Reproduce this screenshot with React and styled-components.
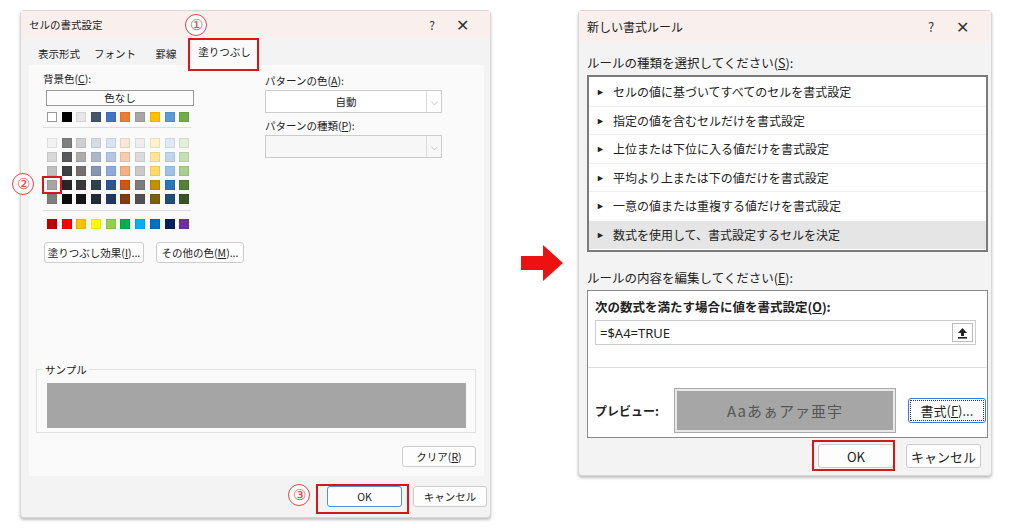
import React from "react";
import styled, { createGlobalStyle } from "styled-components";

const G = createGlobalStyle`
  html,body{margin:0;padding:0;background:#fff;}
  body{font-family:"Noto Sans CJK JP","Noto Sans",sans-serif;color:#222;}
`;

const Page = styled.div`
  width:1024px;height:528px;position:relative;display:flex;align-items:flex-start;
`;
const Dialog = styled.div`
  position:relative;box-sizing:border-box;background:#f3f3f3;
  border:1px solid #d8d8d8;border-radius:4px;display:flex;flex-direction:column;
  margin-left:${p=>p.ml}px;margin-top:10px;width:${p=>p.w}px;height:${p=>p.h}px;
  box-shadow:0 2px 3px rgba(0,0,0,.25);
`;
const TitleBar = styled.div`
  height:${p=>p.h}px;background:#f9efec;display:flex;align-items:center;
  padding:0 18px 0 8px;font-size:${p=>p.fs}px;color:#222;flex-shrink:0;
`;
const TitleText = styled.span`flex:1;`;
const TBtn = styled.span`width:${p=>p.w}px;text-align:center;font-size:${p=>p.fs}px;color:#333;`;
const Tabs = styled.div`display:flex;align-items:flex-end;height:28px;padding-left:8px;font-size:10.5px;`;
const Tab = styled.div`
  width:${p=>p.w}px;height:24px;display:flex;align-items:center;justify-content:center;white-space:nowrap;
  ${p=>p.active&&`background:#fafafa;height:28px;`}
`;
const RedBox = styled.div`
  position:absolute;border:2px solid #d9141b;box-sizing:border-box;
`;
const Circ = styled.div`
  position:absolute;width:20px;height:20px;border:1px solid #e0463e;border-radius:50%;
  color:#e0463e;font-size:15px;display:flex;align-items:center;justify-content:center;
  font-family:"Liberation Sans",sans-serif;background:#fff;
`;
const Panel = styled.div`
  background:#fafafa;margin:0 6px 0 8px;flex:1;display:flex;flex-direction:column;
  padding:6px 8px 9px 14px;font-size:10.5px;
`;
const Cols = styled.div`display:flex;gap:62px;`;
const Col = styled.div`display:flex;flex-direction:column;width:${p=>p.w}px;`;
const Lbl = styled.div`font-size:${p=>p.fs||10.5}px;margin:${p=>p.m||"0"};font-weight:${p=>p.b?700:400};color:#222;white-space:nowrap;`;
const NoColor = styled.div`
  margin:4px 0 0 3px;height:14px;border:1px solid #999;background:#fcfcfc;text-align:center;
  font-size:10.5px;line-height:14px;width:146px;
`;
const SwRow = styled.div`display:flex;gap:4.7px;margin-left:4px;margin-top:${p=>p.mt||4}px;`;
const Sw = styled.div`width:10px;height:10px;background:${p=>p.c};border:1px solid ${p=>p.c==="#ffffff"?"#999":"rgba(0,0,0,.08)"};box-sizing:border-box;`;
const Sep = styled.div`height:1px;background:#ddd;width:148px;margin:${p=>p.m};`;
const Btn = styled.div`
  box-sizing:border-box;height:${p=>p.h||21}px;width:${p=>p.w}px;border:1px solid #ccc;border-radius:3px;flex-shrink:0;
  background:#fdfdfd;display:flex;align-items:center;justify-content:center;font-size:${p=>p.fs||10.5}px;white-space:nowrap;
  ${p=>p.blue&&`border-color:#5b8fc9;`}
  ${p=>p.dot&&`outline:1px dotted #333;outline-offset:-3px;border-color:#3a7bd5;`}
`;
const BtnRow = styled.div`display:flex;gap:${p=>p.g}px;justify-content:${p=>p.j||"flex-start"};margin:${p=>p.m||"0"};`;
const Select = styled.div`
  margin-top:2px;height:21px;border:1px solid #ccc;background:${p=>p.dis?"#f7f7f7":"#fff"};display:flex;
  font-size:10.5px;align-items:center;
`;
const SelVal = styled.div`flex:1;text-align:center;`;
const Caret = styled.div`width:14px;border-left:1px solid #ddd;height:100%;display:flex;align-items:center;justify-content:center;color:#999;font-size:9px;`;
const Fieldset = styled.div`
  position:relative;margin:auto 0 0 -7px;border:1px solid #e2e2e2;height:64px;width:440px;
  box-sizing:border-box;padding:13px 9px 0 10px;
`;
const Legend = styled.span`position:absolute;top:-8px;left:6px;background:#fafafa;padding:0 2px;font-size:10.5px;`;
const Sample = styled.div`height:45px;background:#a5a5a5;`;
const Footer = styled.div`height:41px;display:flex;align-items:center;justify-content:flex-end;gap:11px;padding-right:3px;flex-shrink:0;`;
const Arrow = styled.div`margin:245px 0 0 30px;width:42px;height:36px;flex-shrink:0;`;
const RBody = styled.div`padding:12px 3px 0 8px;display:flex;flex-direction:column;font-size:12.5px;`;
const List = styled.div`border:2px solid #7a7a7a;background:#fff;margin-top:3px;padding:1px 0;`;
const Item = styled.div`
  height:27.5px;display:flex;align-items:center;padding-left:7px;font-size:12px;
  border-bottom:1px solid ${p=>p.last?"transparent":"#f0f0f0"};background:${p=>p.sel?"#e5e5e5":"#fff"};
`;
const Tri = styled.span`font-size:9px;margin-right:8px;`;
const Edit = styled.div`border:1px solid #888;background:#fff;margin-top:3px;height:146px;display:flex;flex-direction:column;`;
const Inp = styled.div`
  margin:4px 11px 0 7px;height:23px;border:1px solid #ccc;display:flex;align-items:center;padding-left:4px;
  font-family:"Noto Sans",sans-serif;font-size:13px;
`;
const Up = styled.div`margin-left:auto;margin-right:2px;width:19px;height:17px;border:1px solid #bbb;display:flex;align-items:center;justify-content:center;`;
const HLine = styled.div`height:1px;background:#ddd;margin-top:22px;`;
const PrevRow = styled.div`display:flex;align-items:center;margin:21px 0 0 7px;`;
const PrevBox = styled.div`
  margin-left:16px;width:220px;height:43px;box-sizing:border-box;border:2px solid #e8e8e8;outline:1px solid #aaa;
  background:#a6a6a6;color:#555;display:flex;align-items:center;justify-content:center;font-size:15px;letter-spacing:1px;
`;

const pal = [
  ["#ffffff","#000000","#e7e6e6","#44546a","#4472c4","#ed7d31","#a5a5a5","#ffc000","#5b9bd5","#70ad47"],
  ["#f2f2f2","#7f7f7f","#d0cece","#d6dce4","#d9e2f3","#fbe5d5","#ededed","#fff2cc","#deebf6","#e2efd9"],
  ["#d8d8d8","#595959","#aeabab","#adb9ca","#b4c6e7","#f7cbac","#dbdbdb","#fee599","#bdd7ee","#c5e0b3"],
  ["#bfbfbf","#3f3f3f","#757070","#8496b0","#8eaadb","#f4b183","#c9c9c9","#ffd965","#9cc3e5","#a8d08d"],
  ["#a5a5a5","#262626","#3a3838","#323f4f","#2f5496","#c55a11","#7b7b7b","#bf9000","#2e75b5","#538135"],
  ["#7f7f7f","#0c0c0c","#171616","#222a35","#1f3864","#833c0b","#525252","#7f6000","#1e4e79","#375623"],
];
const std = ["#c00000","#ff0000","#ffc000","#ffff00","#92d050","#00b050","#00b0f0","#0070c0","#002060","#7030a0"];
const rules = ["セルの値に基づいてすべてのセルを書式設定","指定の値を含むセルだけを書式設定","上位または下位に入る値だけを書式設定","平均より上または下の値だけを書式設定","一意の値または重複する値だけを書式設定","数式を使用して、書式設定するセルを決定"];

export default function App(){
  return <Page><G/>
    <Dialog ml={20} w={471} h={508}>
      <TitleBar h={26} fs={10.5}><TitleText>セルの書式設定</TitleText><TBtn w={40} fs={12}>?</TBtn><TBtn w={20} fs={16}>✕</TBtn></TitleBar>
      <Tabs><Tab w={60}>表示形式</Tab><Tab w={52}>フォント</Tab><Tab w={50}>罫線</Tab><Tab w={67} active>塗りつぶし</Tab></Tabs>
      <Panel>
        <Cols>
          <Col w={160}>
            <Lbl>背景色(<u>C</u>):</Lbl>
            <NoColor>色なし</NoColor>
            <SwRow mt={6}>{pal[0].map((c,i)=><Sw key={i} c={c}/>)}</SwRow>
            <Sep m="5px 0 6px 0"/>
            {pal.slice(1).map((r,j)=><SwRow key={j} mt={j?4:0}>{r.map((c,i)=><Sw key={i} c={c}/>)}</SwRow>)}
            <Sep m="6px 0 4px 0"/>
            <SwRow mt={0}>{std.map((c,i)=><Sw key={i} c={c}/>)}</SwRow>
            <BtnRow g={12} m="13px 0 0 1px"><Btn w={100}>塗りつぶし効果(<u>I</u>)...</Btn><Btn w={88}>その他の色(<u>M</u>)...</Btn></BtnRow>
          </Col>
          <Col w={177}>
            <Lbl m="2px 0 0 0">パターンの色(<u>A</u>):</Lbl>
            <Select><SelVal>自動</SelVal><Caret>⌵</Caret></Select>
            <Lbl m="5px 0 0 0">パターンの種類(<u>P</u>):</Lbl>
            <Select dis><SelVal/><Caret>⌵</Caret></Select>
          </Col>
        </Cols>
        <Fieldset><Legend>サンプル</Legend><Sample/></Fieldset>
        <BtnRow g={0} j="flex-end" m="13px 0 0 0"><Btn w={74}>クリア(<u>R</u>)</Btn></BtnRow>
      </Panel>
      <Footer><Btn w={75} blue>OK</Btn><Btn w={74}>キャンセル</Btn></Footer>
      <Circ style={{left:164,top:3}}>①</Circ>
      <RedBox style={{left:167,top:27,width:71,height:33}}/>
      <Circ style={{left:-9,top:162}}>②</Circ>
      <RedBox style={{left:21,top:165,width:20,height:18}}/>
      <Circ style={{left:267,top:473}}>③</Circ>
      <RedBox style={{left:295,top:473,width:93,height:30}}/>
    </Dialog>
    <Arrow><svg width="42" height="36" viewBox="0 0 42 36"><path d="M0 11H22V0L42 18L22 36V25H0Z" fill="#ee1111"/></svg></Arrow>
    <Dialog ml={15} w={414} h={466}>
      <TitleBar h={30} fs={12}><TitleText>新しい書式ルール</TitleText><TBtn w={40} fs={13}>?</TBtn><TBtn w={22} fs={16}>✕</TBtn></TitleBar>
      <RBody>
        <Lbl fs={12.5}>ルールの種類を選択してください(<u>S</u>):</Lbl>
        <List>{rules.map((r,i)=><Item key={i} sel={i===5} last={i>=4}><Tri>►</Tri>{r}</Item>)}</List>
        <Lbl fs={12.5} m="16px 0 0 0">ルールの内容を編集してください(<u>E</u>):</Lbl>
        <Edit>
          <Lbl fs={12.5} b m="6px 0 0 7px">次の数式を満たす場合に値を書式設定(<u>O</u>):</Lbl>
          <Inp>=$A4=TRUE<Up><svg width="11" height="12" viewBox="0 0 11 12"><path d="M5.5 1L1 6h3v3h3V6h3z" fill="#222"/><rect x="1" y="10" width="9" height="1.6" fill="#222"/></svg></Up></Inp>
          <HLine/>
          <PrevRow><Lbl fs={12} b>プレビュー:</Lbl><PrevBox>Aaあぁアァ亜宇</PrevBox><Btn w={78} h={25} fs={13} dot style={{marginLeft:13}}>書式(<u>F</u>)...</Btn></PrevRow>
        </Edit>
        <BtnRow g={12} j="flex-end" m="6px 7px 0 0"><Btn w={76} h={24} fs={13}>OK</Btn><Btn w={75} h={24} fs={13}>キャンセル</Btn></BtnRow>
      </RBody>
      <RedBox style={{left:233,top:429,width:83,height:31}}/>
    </Dialog>
  </Page>;
}
